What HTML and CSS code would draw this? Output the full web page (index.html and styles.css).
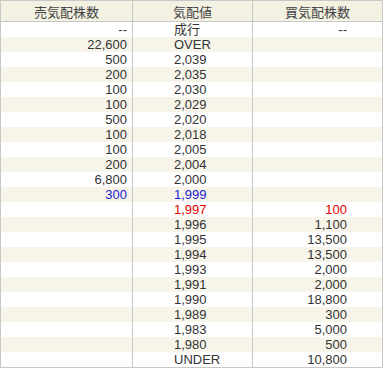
FILE: index.html
```html
<!DOCTYPE html>
<html lang="ja">
<head>
<meta charset="utf-8">
<link rel="stylesheet" href="styles.css">
</head>
<body>
<table class="board">
  <colgroup><col class="c1"><col class="c2"><col class="c3"></colgroup>
  <thead>
    <tr><th>売気配株数</th><th>気配値</th><th>買気配株数</th></tr>
  </thead>
  <tbody>
    <tr><td class="sell">--</td><td class="price">成行</td><td class="buy">--</td></tr>
    <tr><td class="sell">22,600</td><td class="price">OVER</td><td class="buy"></td></tr>
    <tr><td class="sell">500</td><td class="price">2,039</td><td class="buy"></td></tr>
    <tr><td class="sell">200</td><td class="price">2,035</td><td class="buy"></td></tr>
    <tr><td class="sell">100</td><td class="price">2,030</td><td class="buy"></td></tr>
    <tr><td class="sell">100</td><td class="price">2,029</td><td class="buy"></td></tr>
    <tr><td class="sell">500</td><td class="price">2,020</td><td class="buy"></td></tr>
    <tr><td class="sell">100</td><td class="price">2,018</td><td class="buy"></td></tr>
    <tr><td class="sell">100</td><td class="price">2,005</td><td class="buy"></td></tr>
    <tr><td class="sell">200</td><td class="price">2,004</td><td class="buy"></td></tr>
    <tr><td class="sell">6,800</td><td class="price">2,000</td><td class="buy"></td></tr>
    <tr><td class="sell blue">300</td><td class="price blue">1,999</td><td class="buy"></td></tr>
    <tr><td class="sell"></td><td class="price red">1,997</td><td class="buy red">100</td></tr>
    <tr><td class="sell"></td><td class="price">1,996</td><td class="buy">1,100</td></tr>
    <tr><td class="sell"></td><td class="price">1,995</td><td class="buy">13,500</td></tr>
    <tr><td class="sell"></td><td class="price">1,994</td><td class="buy">13,500</td></tr>
    <tr><td class="sell"></td><td class="price">1,993</td><td class="buy">2,000</td></tr>
    <tr><td class="sell"></td><td class="price">1,991</td><td class="buy">2,000</td></tr>
    <tr><td class="sell"></td><td class="price">1,990</td><td class="buy">18,800</td></tr>
    <tr><td class="sell"></td><td class="price">1,989</td><td class="buy">300</td></tr>
    <tr><td class="sell"></td><td class="price">1,983</td><td class="buy">5,000</td></tr>
    <tr><td class="sell"></td><td class="price">1,980</td><td class="buy">500</td></tr>
    <tr><td class="sell"></td><td class="price">UNDER</td><td class="buy">10,800</td></tr>
  </tbody>
</table>
</body>
</html>
```
FILE: styles.css
```css
html, body {
  margin: 0;
  padding: 0;
  background: #fff;
}
.board {
  border-collapse: collapse;
  width: 382px;
  table-layout: fixed;
  font-family: "Liberation Sans", Arial, "Noto Sans CJK JP", sans-serif;
  font-size: 13px;
  color: #333;
  border: 1px solid #c8c8c8;
}
.c1 { width: 132px; }
.c2 { width: 120px; }
.c3 { width: 130px; }
.board th {
  height: 20px;
  padding: 0;
  font-weight: normal;
  color: #444;
  background: #f3f1e1;
  border: 1px solid #c8c8c8;
  text-align: center;
}
.board td {
  height: 15px;
  padding: 0;
  line-height: 15px;
  border-left: 1px solid #c8c8c8;
  border-right: 1px solid #c8c8c8;
}
.board tbody tr:nth-child(even) td {
  background: #f7f5ea;
}
.sell {
  text-align: right;
  padding-right: 5px !important;
}
.price {
  text-align: left;
  padding-left: 41px !important;
}
.buy {
  text-align: right;
  padding-right: 35px !important;
}
.blue { color: #1a1ad0; }
.red { color: #e60000; }
```
